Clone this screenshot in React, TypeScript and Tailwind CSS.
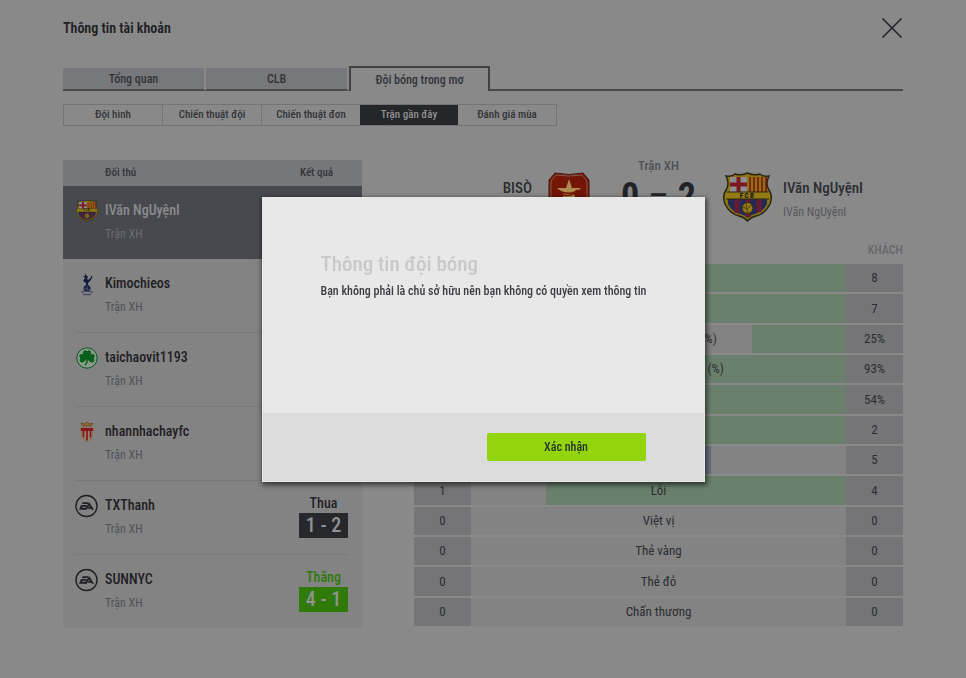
import type { ReactNode } from "react";

type Match = {
  name: string;
  crest: ReactNode;
  result: string;
  score: string;
  won?: boolean;
  selected?: boolean;
};

type Stat = {
  label: string;
  home: string;
  away: string;
  // only the better side gets a bar, in percent of the row
  homeBar?: number;
  awayBar?: number;
};

function BarcaCrest({ className }: { className: string }) {
  return (
    <svg className={className} viewBox="0 0 49 50" aria-hidden="true">
      <defs>
        <clipPath id="barca">
          <path d="M3 4 Q9 5 12 2 Q18 4 24.500 1 Q31 4 37 2 Q40 5 46 4 Q42 12 46 18 Q50 24 47 32 Q42 42 33 44 Q28 45 24.500 49 Q21 45 16 44 Q7 42 2 32 Q-1 24 3 18 Q7 12 3 4Z" />
        </clipPath>
      </defs>
      <g clipPath="url(#barca)">
        <rect width="49" height="50" fill="#8c7413" />
        <rect x="7" y="5" width="17" height="15" fill="#8d8d8d" />
        <path d="M15.500 5V20M7 12.500H24" stroke="#7d1820" strokeWidth="4" />
        <path d="M27 5V20M31 5V20M35 5V20M39 5V20M43 5V20" stroke="#852515" strokeWidth="2" />
        <rect y="20" width="49" height="7" fill="#937a14" />
        <path d="M5 27H44V32Q40 40 32 42Q27 43 24.500 46Q22 43 17 42Q9 40 5 32Z" fill="#222a55" />
        <path d="M14 27V41M25 27V45M36 27V40" stroke="#681a32" strokeWidth="5" />
        <circle cx="24.500" cy="36" r="5.500" fill="#947a17" stroke="#332b18" />
        <path d="M20 35L24 37L29 33M24 37L25 41M23 31L24 37" fill="none" stroke="#4d4012" />
      </g>
      <path
        d="M3 4 Q9 5 12 2 Q18 4 24.500 1 Q31 4 37 2 Q40 5 46 4 Q42 12 46 18 Q50 24 47 32 Q42 42 33 44 Q28 45 24.500 49 Q21 45 16 44 Q7 42 2 32 Q-1 24 3 18 Q7 12 3 4Z"
        fill="none"
        stroke="#292713"
        strokeWidth="1.500"
      />
      <path d="M4 20H45M3 27H46" stroke="#2b2715" />
      <text x="24.500" y="26" textAnchor="middle" fontSize="7" fontWeight="700" letterSpacing="1.500" fill="#171717">
        FCB
      </text>
    </svg>
  );
}

function StarCrest() {
  return (
    <svg className="h-[50px] w-[42px]" viewBox="0 0 42 50" aria-hidden="true">
      <path d="M7 1Q21 4 35 1L41 8V31Q39 43 21 49Q3 43 1 31V8Z" fill="#731507" stroke="#511008" />
      <path d="M8 3Q21 5 34 3L39 9V31Q36 41 21 46Q6 41 3 31V9Z" fill="none" stroke="#7c5f4a" />
      <path d="M21 7L24 16H33L26 22L29 31L21 25L13 31L16 22L9 16H18Z" fill="#ad8a4d" />
      <path d="M11 19Q22 24 30 18Q24 25 16 23" fill="none" stroke="#731507" strokeWidth="1.500" />
    </svg>
  );
}

function SpursCrest() {
  return (
    <svg className="h-[24px] w-[14px]" viewBox="0 0 14 24" aria-hidden="true">
      <path d="M5 1L6 3L8 5L7 7Q9 9 11 5L12 3Q13 6 10 9L8 11V14H6V11L3 9L5 6L3 4L5 4Z" fill="#151b3c" />
      <circle cx="7" cy="16.500" r="3.500" fill="#1b2244" />
      <path d="M4 16L10 18M7 14V20" stroke="#6c7080" strokeWidth=".5" />
      <path d="M1 20H4M10 20H13M3 22.500H11" fill="none" stroke="#4b4e60" strokeWidth="1.500" />
    </svg>
  );
}

function CloverCrest() {
  return (
    <svg className="h-[22px] w-[22px]" viewBox="0 0 22 22" aria-hidden="true">
      <circle cx="11" cy="11" r="10.200" fill="#8a9a8b" stroke="#075821" />
      <path
        d="M11 11Q6 7 8 4Q10 3 11 5Q12 3 14 4Q16 7 11 11Q14 6 18 8Q19 10 17 11Q19 13 17 15Q14 16 11 11Q8 16 5 15Q3 13 5 11Q3 10 4 8Q8 6 11 11Z"
        fill="#05601c"
        stroke="#05601c"
      />
      <path d="M11 11Q12 15 9 18" fill="none" stroke="#05601c" strokeWidth="1.500" />
    </svg>
  );
}

function MonacoCrest() {
  return (
    <svg className="h-[22px] w-[16px]" viewBox="0 0 16 22" aria-hidden="true">
      <path d="M3.500 5L2 2L5.500 3L8 1L10.500 3L14 2L12.500 5Z" fill="#8a6a35" stroke="#6d3a20" strokeWidth=".7" />
      <path d="M1.500 7H14.500V10L13.500 11V15Q13 18 8 21Q3 18 2.500 15V11L1.500 10Z" fill="#93856f" stroke="#8a6a45" strokeWidth=".8" />
      <path d="M2 7H14V10H2Z" fill="#85161a" />
      <path d="M4.500 10V16.500M8 10V19.500M11.500 10V16.500" stroke="#85161a" strokeWidth="1.700" />
    </svg>
  );
}

function EaLogo() {
  return (
    <svg className="h-6 w-6" viewBox="0 0 24 24" aria-hidden="true">
      <circle cx="12" cy="12" r="11" fill="none" stroke="#1f2023" strokeWidth="1.500" />
      <path d="M8.200 8H14.500L13.300 9.900H7ZM6.400 11H12.600L11.400 12.900H7.800L7.200 13.900H11L14.900 8L19.800 15.800H17.500L16.900 14.800H13.200L14.400 12.900H15.700L14.900 11.500L12.100 15.800H4L5.800 12.900H5.200Z" fill="#1f2023" />
    </svg>
  );
}

const tabs = ["Tổng quan", "CLB", "Đội bóng trong mơ"];
const subTabs = ["Đội hình", "Chiến thuật đội", "Chiến thuật đơn", "Trận gần đây", "Đánh giá mùa"];

const matches: Match[] = [
  { name: "IVăn NgUyệnI", crest: <BarcaCrest className="h-[24px] w-[22px]" />, result: "Thua", score: "0 - 2", selected: true },
  { name: "Kimochieos", crest: <SpursCrest />, result: "Thua", score: "0 - 1" },
  { name: "taichaovit1193", crest: <CloverCrest />, result: "Thắng", score: "2 - 1", won: true },
  { name: "nhannhachayfc", crest: <MonacoCrest />, result: "Thua", score: "1 - 3" },
  { name: "TXThanh", crest: <EaLogo />, result: "Thua", score: "1 - 2" },
  { name: "SUNNYC", crest: <EaLogo />, result: "Thắng", score: "4 - 1", won: true },
];

const stats: Stat[] = [
  { label: "Sút", home: "3", away: "8", awayBar: 73 },
  { label: "Sút trúng đích", home: "2", away: "7", awayBar: 78 },
  { label: "Sút bóng chính xác (%)", home: "0%", away: "25%", awayBar: 25 },
  { label: "Chuyền bóng hoàn tất (%)", home: "88%", away: "93%", awayBar: 93 },
  { label: "Kiểm soát bóng", home: "46%", away: "54%", awayBar: 54 },
  { label: "Phạt góc", home: "1", away: "2", awayBar: 67 },
  { label: "Tắc bóng", home: "9", away: "5", homeBar: 64 },
  { label: "Lỗi", home: "1", away: "4", awayBar: 80 },
  { label: "Việt vị", home: "0", away: "0" },
  { label: "Thẻ vàng", home: "0", away: "0" },
  { label: "Thẻ đỏ", home: "0", away: "0" },
  { label: "Chấn thương", home: "0", away: "0" },
];

function MatchList() {
  return (
    <table className="w-[299px] shrink-0 border-collapse self-start bg-[#838383]">
      <thead>
        <tr className="h-[26px] bg-[#76777a] text-[11px] text-[#333438]">
          <th className="pl-[42px] text-left font-medium">Đối thủ</th>
          <th className="w-[77px] pr-[14px] text-center font-medium">Kết quả</th>
        </tr>
      </thead>
      <tbody>
        {matches.map((match, i) => {
          const line = match.selected || i === matches.length - 1 ? "" : "border-b border-[#797979]";
          return (
            <tr key={match.name} className={match.selected ? "bg-[#48494e]" : ""}>
              <td className="p-0 pl-3">
                <div className={`flex gap-[7px] pt-3 ${line}`}>
                  <div className="flex h-[26px] w-[23px] items-center justify-center">{match.crest}</div>
                  <div className="h-[61px]">
                    <div className={`text-sm leading-6 font-medium ${match.selected ? "text-[#8b8b8d]" : "text-[#1f2023]"}`}>
                      {match.name}
                    </div>
                    <div className={`text-xs leading-6 ${match.selected ? "text-[#6b6c70]" : "text-[#515257]"}`}>Trận XH</div>
                  </div>
                </div>
              </td>
              <td className="p-0 pr-[14px]">
                <div className={`flex h-full flex-col items-end pt-3 ${line}`}>
                  <div className="h-[61px] w-[49px] text-center">
                    <div className={`text-sm leading-5 font-medium ${match.won ? "text-[#2f7a08]" : "text-[#222327]"}`}>
                      {match.result}
                    </div>
                    <div className={`h-[25px] text-xl leading-[25px] font-medium text-[#929292] ${match.won ? "bg-[#2f7a08]" : "bg-[#27282c]"}`}>
                      {match.score}
                    </div>
                  </div>
                </div>
              </td>
            </tr>
          );
        })}
      </tbody>
    </table>
  );
}

function MatchDetail() {
  return (
    <section className="min-w-0 flex-1">
      <div className="flex h-[102px] flex-col justify-between">
        <div className="grid grid-cols-[1fr_75px_1fr] gap-[27px] pt-3">
          <div className="flex justify-end gap-3">
            <div className="pt-1 text-right">
              <div className="text-[15px] leading-6 font-medium text-[#2c2d31]">BISÒ</div>
              <div className="text-xs leading-6 text-[#55565a]">BISÒ</div>
            </div>
            <div className="flex w-[50px] justify-center">
              <StarCrest />
            </div>
          </div>
          <div className="-mt-4 text-center">
            <div className="text-[13px] leading-5 font-medium text-[#505156]">Trận XH</div>
            <div className="flex justify-between text-4xl leading-10 font-bold text-[#222327]">
              <span>0</span>
              <span className="font-normal">–</span>
              <span>2</span>
            </div>
          </div>
          <div className="flex gap-[11px]">
            <BarcaCrest className="h-[50px] w-[49px] shrink-0" />
            <div className="pt-1 whitespace-nowrap">
              <div className="text-[15px] leading-6 font-medium text-[#2c2d31]">IVăn NgUyệnI</div>
              <div className="text-xs leading-6 text-[#55565a]">IVăn NgUyệnI</div>
            </div>
          </div>
        </div>
        <div className="flex justify-between text-xs leading-6 font-medium text-[#66676d]">
          <span>NHÀ</span>
          <span>KHÁCH</span>
        </div>
      </div>
      <table className="h-[366px] w-full table-fixed border-separate border-spacing-x-0 border-spacing-y-[2px] text-[13px] text-[#2c2d31]">
        <tbody>
          {stats.map((stat) => (
            <tr key={stat.label}>
              <td className="w-[57px] bg-[#757578] p-0 text-center">{stat.home}</td>
              <th scope="row" className="relative bg-[#838383] p-0 font-normal">
                {stat.homeBar && (
                  <span className="absolute inset-y-0 left-0 bg-[#6a7280]" style={{ width: `${stat.homeBar}%` }} />
                )}
                {stat.awayBar && (
                  <span className="absolute inset-y-0 right-0 bg-[#6a806d]" style={{ width: `${stat.awayBar}%` }} />
                )}
                <span className="relative">{stat.label}</span>
              </th>
              <td className="w-[57px] bg-[#757578] p-0 text-center">{stat.away}</td>
            </tr>
          ))}
        </tbody>
      </table>
    </section>
  );
}

function NoAccessDialog() {
  return (
    <div className="fixed inset-0 flex items-center justify-center">
      <div
        role="dialog"
        aria-modal="true"
        aria-labelledby="dialog-title"
        className="flex w-[443px] flex-col border border-[#e8e8e8] bg-[#e8e8e8] shadow-[1px_2px_5px_1px_rgba(0,0,0,0.6)]"
      >
        <div className="h-[215px] px-[58px] pt-[50px]">
          <h2 id="dialog-title" className="text-[21px] leading-8 font-medium text-[#c8c9c9]">
            Thông tin đội bóng
          </h2>
          <p className="text-xs leading-[22px] font-medium whitespace-nowrap text-[#3c3d42]">
            Bạn không phải là chủ sở hữu nên bạn không có quyền xem thông tin
          </p>
        </div>
        <div className="flex justify-end bg-[#dbdbdb] px-[58px] py-5">
          <button type="button" className="h-7 w-[159px] rounded-xs bg-[#92d50d] text-xs font-medium text-[#26332b]">
            Xác nhận
          </button>
        </div>
      </div>
    </div>
  );
}

export default function App() {
  return (
    <div className="min-h-screen bg-[#898989] px-[63px] pt-4 font-['Roboto_Condensed','Liberation_Sans_Narrow',sans-serif]">
      <header className="flex h-6 items-center justify-between">
        <h1 className="text-sm font-semibold text-[#1d2024]">Thông tin tài khoản</h1>
        <button type="button" aria-label="Đóng">
          <svg className="h-[22px] w-[22px]" viewBox="0 0 22 22" fill="none" stroke="#222327" strokeWidth="1.600">
            <path d="M1.500 1.500L20.500 20.500M20.500 1.500L1.500 20.500" />
          </svg>
        </button>
      </header>

      <nav className="mt-[26px] flex h-[25px] items-end text-xs font-medium text-[#333438]">
        {tabs.map((tab, i) =>
          i === 2 ? (
            <button key={tab} type="button" className="h-[25px] w-[141px] border-2 border-b-0 border-[#414144]">
              {tab}
            </button>
          ) : (
            <button key={tab} type="button" className="h-[23px] w-[143px] border-r-2 border-b-2 border-r-[#898989] border-b-[#4b4b4e] bg-[#77787b]">
              {tab}
            </button>
          ),
        )}
        <div className="flex-1 border-b-2 border-[#48484b]" />
      </nav>

      <nav className="mt-[13px] flex">
        <div className="flex h-[22px] w-[494px] border border-[#747476] text-[11px] font-medium text-[#333438]">
          {subTabs.map((tab, i) => (
            <button
              key={tab}
              type="button"
              className={
                i === 3
                  ? "flex-1 bg-[#25262a] text-[#909090]"
                  : `flex-1 whitespace-nowrap ${i < 2 ? "border-r border-[#747476]" : ""}`
              }
            >
              {tab}
            </button>
          ))}
        </div>
      </nav>

      <main className="mt-[34px] flex gap-[52px] pb-10">
        <MatchList />
        <MatchDetail />
      </main>

      <NoAccessDialog />
    </div>
  );
}
